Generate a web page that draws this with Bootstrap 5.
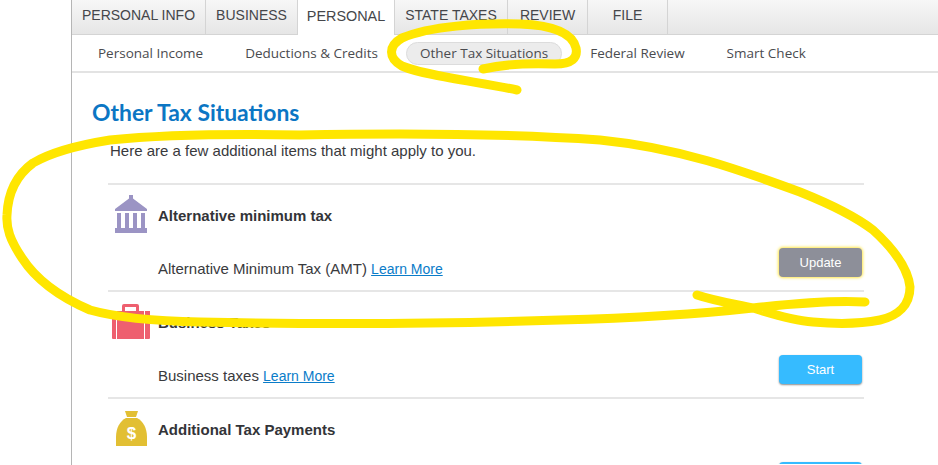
<!DOCTYPE html>
<html lang="en">
<head>
    <meta charset="UTF-8">
    <meta name="viewport" content="width=device-width, initial-scale=1.0">
    <title>Other Tax Situations</title>
    <link href="https://cdn.jsdelivr.net/npm/bootstrap@5.3.0/dist/css/bootstrap.min.css" rel="stylesheet">
    <style>
        html, body { height: 465px; overflow: hidden; background: #fff; }
        body { font-family: "Liberation Sans", Arial, sans-serif; color: #393a3d; position: relative; }
        .app-shell { margin-left: 71px; border-left: 1px solid #b5b5b5; height: 465px; overflow: hidden; }

        /* top tabs */
        .top-tabs { height: 35px; background: linear-gradient(#f7f7f7, #e6e6e6); border-bottom: 1px solid #d4d4d4; }
        .top-tab { height: 34px; font-size: 14px; line-height: 30px; color: #45464a; text-align: center; border-right: 1px solid #d4d4d4; }
        .top-tab.on { background: #fff; height: 35px; line-height: 32px; font-size: 14.4px; }
        .w-info { width: 134px; } .w-biz { width: 92px; } .w-pers { width: 97px; }
        .w-state { width: 113px; } .w-rev { width: 80px; } .w-file { width: 80px; }

        /* second level nav */
        .sub-tabs { height: 38px; border-bottom: 2px solid #e3e3e3; padding-left: 12px; gap: 14px; font-family: "Open Sans", sans-serif; font-size: 13.5px; }
        .sub-tab { padding: 0 14px; height: 23px; line-height: 22px; margin-top: 7px; color: #4a4b4f; white-space: nowrap; }
        .sub-tab.on { background: #ececec; border: 1px solid #dcdcdc; border-radius: 12px; line-height: 21px; padding: 0 13px; }

        .page-title { font-family: Lato, sans-serif; font-weight: 700; font-size: 22.9px; color: #0b76c4; margin: 25px 0 0 20px; line-height: 28px; }
        .intro-text { font-size: 15px; margin: 16px 0 0 38px; line-height: 18px; }
        .tax-list { margin: 23px 0 0 36px; width: 756px; }

        .tax-row { height: 107px; border-top: 2px solid #e6e6e6; padding-left: 50px; position: relative; }
        .tax-row.last-row { height: 67px; overflow: hidden; }
        .tax-icon { position: absolute; top: 12px; }
        .icon-bank { left: 7px; top: 10px; }
        .icon-case { left: 4px; }
        .icon-bag { left: 8px; }
        .tax-name { font-weight: 700; font-size: 15px; line-height: 18px; padding-top: 22px; color: #333438; }
        .tax-desc { font-size: 15px; line-height: 18px; margin-top: 35px; }
        .tax-desc a { color: #0a7cc9; font-size: 14px; }
        .tax-btn { width: 83px; height: 29px; margin: 23px 2px 0 0; padding: 0; font-size: 13px; color: #fff; border: 0; border-radius: 4px; }
        .btn-start, .btn-start:hover { background: #36bbff; color: #fff; box-shadow: 0 1px 2px #8a8a8a; }
        .btn-update, .btn-update:hover { background: #8d8f99; color: #fff; box-shadow: 0 0 3px 1px #ffe74a; }

        .marker { position: absolute; left: 0; top: 0; pointer-events: none; }
    </style>
</head>
<body>
    <div class="app-shell">
        <!-- main steps -->
        <div class="top-tabs d-flex">
            <div class="top-tab w-info">PERSONAL INFO</div>
            <div class="top-tab w-biz">BUSINESS</div>
            <div class="top-tab w-pers on">PERSONAL</div>
            <div class="top-tab w-state">STATE TAXES</div>
            <div class="top-tab w-rev">REVIEW</div>
            <div class="top-tab w-file">FILE</div>
        </div>

        <div class="sub-tabs d-flex">
            <div class="sub-tab">Personal Income</div>
            <div class="sub-tab">Deductions &amp; Credits</div>
            <div class="sub-tab on">Other Tax Situations</div>
            <div class="sub-tab">Federal Review</div>
            <div class="sub-tab">Smart Check</div>
        </div>

        <h1 class="page-title">Other Tax Situations</h1>
        <p class="intro-text">Here are a few additional items that might apply to you.</p>

        <div class="tax-list">
            <div class="tax-row">
                <svg class="tax-icon icon-bank" width="32" height="38" viewBox="0 0 32 38" fill="#9b94c4">
                    <path d="M14 0h4v3.500L32 14v2H0v-2L14 3.500z"/>
                    <path d="M2 18h4v15H2zM10 18h4v15h-4zM18 18h4v15h-4zM26 18h4v15h-4z"/>
                    <rect x="0" y="33" width="32" height="5"/>
                </svg>
                <div class="tax-name">Alternative minimum tax</div>
                <div class="d-flex justify-content-between">
                    <div class="tax-desc">Alternative Minimum Tax (AMT) <a href="#">Learn More</a></div>
                    <button class="btn tax-btn btn-update">Update</button>
                </div>
            </div>
            <div class="tax-row">
                <svg class="tax-icon icon-case" width="38" height="35" viewBox="0 0 38 35" fill="#ee5f6f">
                    <path d="M10 7V2q0-2 2-2h13q2 0 2 2v5h-3V3H13v4z"/>
                    <path d="M0 7h4v28H1q-1 0-1-1zM5 7h27v28H5zM33 7h5v27q0 1-1 1h-4z"/>
                </svg>
                <div class="tax-name">Business Taxes</div>
                <div class="d-flex justify-content-between">
                    <div class="tax-desc">Business taxes <a href="#">Learn More</a></div>
                    <button class="btn tax-btn btn-start">Start</button>
                </div>
            </div>
            <div class="tax-row last-row">
                <svg class="tax-icon icon-bag" width="31" height="35" viewBox="0 0 31 35" fill="#e2bf33">
                    <path d="M9 0h13l-2 6h-9z"/>
                    <path d="M10 7h11c6 3 10 10 10 19v9H0v-9C0 17 4 10 10 7z"/>
                    <text x="15.500" y="28" text-anchor="middle" fill="#fff" font-family="Liberation Sans, sans-serif" font-weight="700" font-size="17">$</text>
                </svg>
                <div class="tax-name">Additional Tax Payments</div>
                <div class="d-flex justify-content-end">
                    <button class="btn tax-btn btn-start" aria-label="Start"></button>
                </div>
            </div>
        </div>
    </div>

    <!-- highlighter scribbles on top of the screenshot -->
    <svg class="marker" width="938" height="465" fill="none" stroke="#ffe600" stroke-width="9" stroke-linecap="round" stroke-linejoin="round">
        <path d="M517 90C480 82 425 76 402 66C388 58 388 46 402 38C430 26 480 23 520 24C550 25 572 32 576 48C578 58 572 64 555 64C530 63 505 64 483 69"/>
        <path d="M865 302C830 300 790 304 753 308C700 314 640 318 560 320C440 324 300 324 200 322C150 321 115 317 90 310C55 295 35 278 22 258C10 240 6 228 7 215C8 190 18 174 33 163C55 150 85 144 110 140C170 134 240 134 300 135C400 133 500 133 600 140C680 148 740 170 800 192C840 208 860 220 873 230C895 250 908 268 910 287C910 305 898 316 880 320C860 324 835 324 813 322C790 320 770 313 753 308C735 304 715 301 697 295"/>
    </svg>
    <script src="https://cdn.jsdelivr.net/npm/bootstrap@5.3.0/dist/js/bootstrap.bundle.min.js"></script>
</body>
</html>
